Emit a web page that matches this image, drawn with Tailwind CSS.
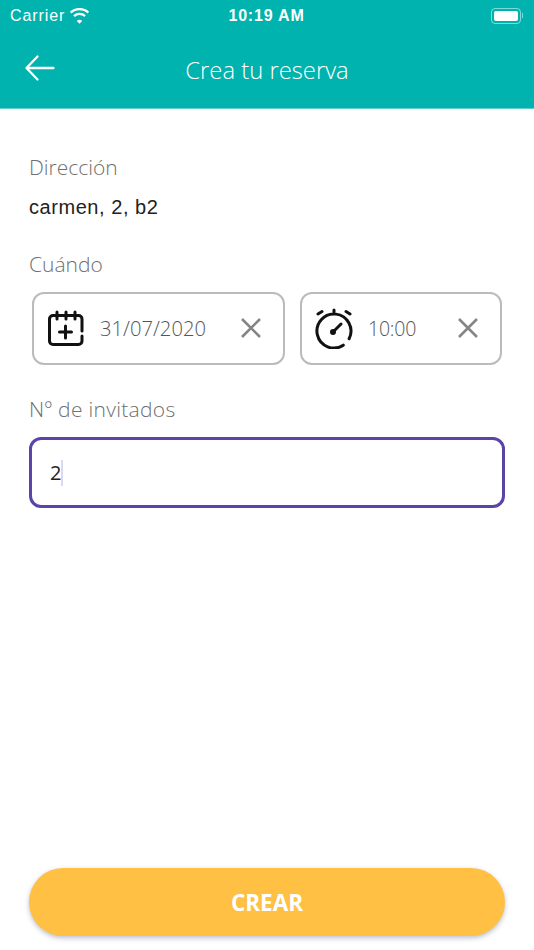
<!DOCTYPE html>
<html lang="en">
<head>
    <meta charset="UTF-8">
    <meta name="viewport" content="width=device-width, initial-scale=1.0">
    <title>Crea tu reserva</title>
    <script src="https://cdn.jsdelivr.net/npm/@tailwindcss/browser@4"></script>
</head>
<body class="bg-white h-[950px] w-[534px] overflow-hidden flex flex-col font-['Open_Sans',sans-serif]">

    <!-- Header -->
    <header class="bg-[#00b3ae] h-[109px] shrink-0 border-b border-[#5fd0cd]">
        <div class="h-[31px] pl-[10px] pr-[11px] grid grid-cols-3 items-center text-white font-['Liberation_Sans',sans-serif]">
            <div class="flex items-center gap-[4px] text-[16px] tracking-[0.9px]">
                <span>Carrier</span>
                <svg width="21" height="16" viewBox="0 0 21 16" fill="#fff"><path d="M10.5 2.2c3.1 0 5.900 1.200 8 3.200l1.600-1.700A13.900 13.900 0 0 0 10.500 0 13.900 13.900 0 0 0 .9 3.700l1.600 1.700a11.600 11.600 0 0 1 8-3.200zM10.500 7.100c1.800 0 3.400.7 4.600 1.800l1.700-1.700a9.200 9.200 0 0 0-12.600 0l1.700 1.700a6.700 6.700 0 0 1 4.600-1.800zM10.500 11.800c-1.100 0-2 .4-2.700 1.100l2.700 2.800 2.700-2.800c-.7-.7-1.600-1.100-2.700-1.100z"/></svg>
            </div>
            <div class="text-center text-[16px] font-bold tracking-[0.8px] whitespace-nowrap">10:19 AM</div>
            <div class="flex justify-end items-center">
                <div class="w-[30px] h-[16px] rounded-[4px] border border-white/50 p-[2px]">
                    <div class="w-full h-full bg-white rounded-[2px]"></div>
                </div>
                <div class="w-[1.500px] h-[5px] bg-white/50 ml-[1px]"></div>
            </div>
        </div>
        <div class="relative h-[77px] flex items-center justify-center">
            <svg class="absolute left-[24px] top-[23px]" width="32" height="28" viewBox="0 0 32 28" fill="none" stroke="#fff" stroke-width="2.300" stroke-linecap="round" stroke-linejoin="round"><path d="M2.500 14h27M13.500 2.500 2.500 14l11 11.500"/></svg>
            <h1 class="text-white text-[23.800px] font-light mt-[2px]">Crea tu reserva</h1>
        </div>
    </header>

    <!-- Form -->
    <main class="flex-1 flex flex-col px-[29px] pt-[43px] pb-[14px]">
        <p class="text-[#6f6f6f] text-[21px] font-light leading-[30px]">Dirección</p>
        <p class="text-[#222] text-[20px] leading-[26px] mt-[12px] font-['Liberation_Sans',sans-serif] tracking-[0.55px]">carmen, 2, b2</p>

        <p class="text-[#6f6f6f] text-[21px] font-light leading-[30px] mt-[29px]">Cuándo</p>
        <div class="flex gap-[15px] mt-[13px] pl-[3px]">
            <div class="w-[253px] h-[73px] rounded-[12px] border-2 border-[#bbbbbb] flex items-center pl-[13px] pr-[21px]">
                <svg class="-mt-[1px]" width="38" height="38" viewBox="0 0 38 38" fill="none" stroke="#111" stroke-width="3" stroke-linecap="round" stroke-linejoin="round"><path d="M35 27v5a3.500 3.500 0 0 1-3.500 3.500H6A3.500 3.500 0 0 1 2.500 32V10A3.500 3.500 0 0 1 6 6.500h25.500A3.500 3.500 0 0 1 35 10v12M10 3v7M19 3v7M28 3v7M18.500 17v12M12.500 23h12"/></svg>
                <span class="ml-[15px] text-[#555] text-[20.200px] font-light">31/07/2020</span>
                <svg class="ml-auto -mt-[1px]" width="22" height="22" viewBox="0 0 22 22" stroke="#858585" stroke-width="2.600" fill="none"><path d="M2 2l18 18M20 2 2 20"/></svg>
            </div>
            <div class="w-[202px] h-[73px] rounded-[12px] border-2 border-[#bbbbbb] flex items-center pl-[13px] pr-[21px]">
                <svg class="-mt-[2px]" width="38" height="42" viewBox="0 0 38 42" fill="none" stroke="#111" stroke-width="3" stroke-linecap="round" stroke-linejoin="round"><path d="M28.300 38.200A17 17 0 1 1 34.100 31.700M19 3v2M3 7l4-2.500M35 7l-4-2.500M18 25l8-8"/><circle cx="18" cy="25" r="1.500" fill="#111"/></svg>
                <span class="ml-[15px] text-[#555] text-[19.500px] font-light tracking-[-0.2px]">10:00</span>
                <svg class="ml-auto -mt-[1px]" width="22" height="22" viewBox="0 0 22 22" stroke="#858585" stroke-width="2.600" fill="none"><path d="M2 2l18 18M20 2 2 20"/></svg>
            </div>
        </div>

        <p class="text-[#6f6f6f] text-[21px] font-light leading-[30px] mt-[29px] tracking-[0.3px]">Nº de invitados</p>
        <div class="h-[71px] mt-[13px] rounded-[12px] border-[3px] border-[#5b43a8] flex items-center pl-[18px]">
            <span class="text-[#222] text-[20px]">2</span>
            <span class="w-[2px] h-[26px] bg-[#dcd8f0]"></span>
        </div>

        <button class="mt-auto h-[68px] pt-[1px] rounded-full bg-[#ffc043] text-white text-[22.500px] font-bold shadow-[0_2px_5px_rgba(60,70,110,0.35)]">CREAR</button>
    </main>

</body>
</html>
